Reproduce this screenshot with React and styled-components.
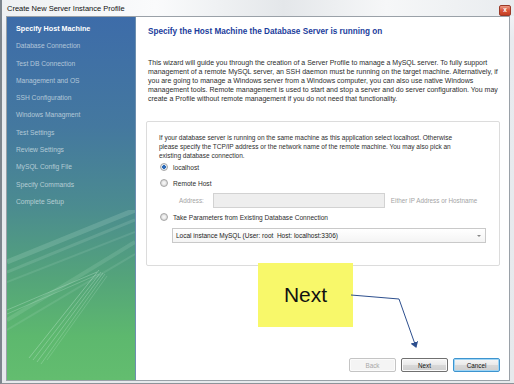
import React from 'react';
import styled, { createGlobalStyle } from 'styled-components';

const GlobalStyle = createGlobalStyle`
    html, body { margin: 0; padding: 0; }
    body {
        width: 514px;
        height: 384px;
        overflow: hidden;
        font-family: "Liberation Sans", Arial, sans-serif;
        background: #d9dde2;
    }
`;

const Screen = styled.div`
    width: 514px;
    height: 384px;
    display: flex;
    flex-direction: column;
    position: relative;
    overflow: hidden;
`;

const BehindStrip = styled.div`
    height: 3px;
    background: linear-gradient(90deg, #56606a, #8a939c 40%, #b8bec4 70%, #6d7780);
`;

const Window = styled.div`
    flex: 1;
    display: flex;
    flex-direction: column;
    background: linear-gradient(180deg, #f7f8fa 0%, #e8ebef 10%, #e6e9ec 100%);
    border-left: 2px solid #7d858d;
    border-bottom: 1px solid #8c9399;
`;

const TitleBar = styled.div`
    height: 16px;
    display: flex;
    align-items: center;
    justify-content: space-between;
    padding: 0 3px 0 5px;
    background: linear-gradient(90deg, #eef0f2 0%, #fafbfc 30%, #e4e7ea 55%, #f6f7f8 75%, #e9ecef 100%);
`;

const Title = styled.span`
    font-size: 7.5px;
    color: #111;
`;

const CloseButton = styled.div`
    width: 10px;
    height: 9px;
    margin-top: 5px;
    border-radius: 2px;
    background: linear-gradient(180deg, #ec9a86 0%, #d8553a 50%, #c43e22 100%);
    border: 1px solid #9a3a28;
    display: flex;
    align-items: center;
    justify-content: center;
    color: #fff;
    font-size: 6.5px;
    font-weight: bold;
    line-height: 1;
`;

const Body = styled.div`
    flex: 1;
    display: flex;
    margin: 0 4px 2px 4px;
    border: 1px solid #9aa1a8;
    position: relative;
`;

const Sidebar = styled.div`
    width: 128px;
    display: flex;
    flex-direction: column;
    padding-top: 3px;
    background: linear-gradient(180deg, #3d6ca9 0%, #44789f 30%, #4b8b90 52%, #54a47a 72%, #5db86e 88%, #63bd6f 100%);
`;

const Step = styled.div`
    height: 17.3px;
    line-height: 17.3px;
    padding-left: 9px;
    font-size: ${p => (p.active ? '7.2px' : '6.7px')};
    font-weight: ${p => (p.active ? 'bold' : 'normal')};
    color: ${p => (p.active ? '#ffffff' : 'rgba(225, 236, 240, 0.7)')};
    white-space: nowrap;
`;

const Streaks = styled.svg`
    margin-top: auto;
    display: block;
`;

const Content = styled.div`
    flex: 1;
    display: flex;
    flex-direction: column;
    background: #fff;
    padding: 10px 9px 8px 10px;
    border-left: 1px solid #6c8fb0;
`;

const Heading = styled.h1`
    margin: 0 0 0 2px;
    font-size: 8.2px;
    line-height: 10px;
    font-weight: bold;
    color: #1c3d9c;
`;

const Intro = styled.p`
    margin: 21px 0 0 2px;
    font-size: 7px;
    line-height: 9px;
    color: #2d2d2d;
    white-space: nowrap;
`;

const Panel = styled.div`
    margin-top: 18px;
    height: 145px;
    box-sizing: border-box;
    border: 1px solid #dcdcdc;
    border-radius: 2px;
    padding: 11px 12px 0 12px;
    display: flex;
    flex-direction: column;
`;

const PanelText = styled.p`
    margin: 0 0 -1px;
    font-size: 6.5px;
    line-height: 9px;
    color: #2d2d2d;
    white-space: nowrap;
`;

const Option = styled.label`
    display: flex;
    align-items: center;
    gap: 5px;
    height: 16px;
    margin-left: 1px;
    font-size: 6.6px;
    color: #2d2d2d;
`;

const Radio = styled.span`
    width: 6px;
    height: 6px;
    border-radius: 50%;
    border: 1px solid #a7a7a7;
    background: ${p => (p.checked
        ? 'radial-gradient(circle, #2b6ab8 0 1.6px, #dfe6ee 2px)'
        : 'radial-gradient(circle, #f4f4f4 0 1px, #d7d7d7 3px)')};
`;

const AddressRow = styled.div`
    display: flex;
    align-items: center;
    height: 18px;
    padding-left: 20px;
    font-size: 6.3px;
    color: #a4a4a4;
`;

const AddressInput = styled.div`
    width: 170px;
    height: 13px;
    margin: 0 6px 0 9px;
    border: 1px solid #d2d2d2;
    background: #eeeeee;
`;

const Select = styled.div`
    margin: 3px 1px 0 13px;
    height: 13px;
    border: 1px solid #c9c9c9;
    background: linear-gradient(180deg, #ffffff, #f4f4f4);
    display: flex;
    align-items: center;
    justify-content: space-between;
    padding: 0 4px 0 3px;
    font-size: 6.5px;
    color: #222;
`;

const Caret = styled.span`
    width: 0;
    height: 0;
    border-left: 2px solid transparent;
    border-right: 2px solid transparent;
    border-top: 2px solid #888;
`;

const Footer = styled.div`
    margin-top: auto;
    display: flex;
    justify-content: flex-end;
    gap: 5px;
`;

const Button = styled.button`
    width: 47px;
    height: 14px;
    padding: 0;
    font-family: "Liberation Sans", Arial, sans-serif;
    font-size: 6.3px;
    border-radius: 2px;
    border: 1px solid ${p => (p.primary ? '#3d94cf' : p.disabled ? '#c4c4c4' : '#707070')};
    color: ${p => (p.disabled ? '#a8a8a8' : '#111')};
    background: ${p => (p.disabled
        ? '#f4f4f4'
        : 'linear-gradient(180deg, #f6f6f6 0%, #e9e9e9 50%, #d8d8d8 52%, #cfcfcf 100%)')};
    box-shadow: ${p => (p.primary ? 'inset 0 0 0 1px #9fd5f5' : 'inset 0 0 0 1px #fbfbfb')};
`;

const Callout = styled.div`
    position: absolute;
    left: 251px;
    top: 246px;
    width: 95px;
    height: 64px;
    background: #f8f86a;
    display: flex;
    align-items: center;
    justify-content: center;
    font-size: 21px;
    color: #111;
    font-family: "Liberation Sans", Arial, sans-serif;
`;

const Pointer = styled.svg`
    position: absolute;
    left: 0;
    top: 0;
    pointer-events: none;
`;

const steps = [
    'Specify Host Machine',
    'Database Connection',
    'Test DB Connection',
    'Management and OS',
    'SSH Configuration',
    'Windows Managment',
    'Test Settings',
    'Review Settings',
    'MySQL Config File',
    'Specify Commands',
    'Complete Setup',
];

function SidebarArt() {
    return (
        <Streaks width="128" height="170" viewBox="0 0 128 170">
            <g stroke="#cfeedd" fill="none">
                <path d="M0 52 L128 0" strokeWidth="5" opacity="0.18" />
                <path d="M0 62 L128 10" strokeWidth="3" opacity="0.15" />
                <path d="M0 72 L128 22" strokeWidth="2" opacity="0.12" />
                <path d="M0 110 L128 32" strokeWidth="4" opacity="0.14" />
                <path d="M0 120 L128 44" strokeWidth="2" opacity="0.12" />
                <path d="M22 148 L92 60" strokeWidth="1" opacity="0.35" />
                <path d="M26 150 L94 62" strokeWidth="1" opacity="0.3" />
                <path d="M30 152 L96 63" strokeWidth="1" opacity="0.3" />
                <path d="M34 154 L98 64" strokeWidth="1" opacity="0.25" />
                <path d="M40 150 L100 66" strokeWidth="1" opacity="0.2" />
                <path d="M0 100 L90 62" strokeWidth="1" opacity="0.3" />
                <path d="M0 104 L92 64" strokeWidth="1" opacity="0.25" />
            </g>
        </Streaks>
    );
}

export default function App() {
    return (
        <Screen>
            <GlobalStyle />
            <BehindStrip />
            <Window>
                <TitleBar>
                    <Title>Create New Server Instance Profile</Title>
                    <CloseButton>x</CloseButton>
                </TitleBar>
                <Body>
                    <Sidebar>
                        {steps.map((s, i) => (
                            <Step key={s} active={i === 0}>{s}</Step>
                        ))}
                        <SidebarArt />
                    </Sidebar>
                    <Content>
                        <Heading>Specify the Host Machine the Database Server is running on</Heading>
                        <Intro>
                            This wizard will guide you through the creation of a Server Profile to manage a MySQL server. To fully support<br />
                            management of a remote MySQL server, an SSH daemon must be running on the target machine. Alternatively, if<br />
                            you are going to manage a Windows server from a Windows computer, you can also use native Windows<br />
                            management tools. Remote management is used to start and stop a server and do server configuration. You may<br />
                            create a Profile without remote management if you do not need that functionality.
                        </Intro>
                        <Panel>
                            <PanelText>
                                If your database server is running on the same machine as this application select localhost. Otherwise<br />
                                please specify the TCP/IP address or the network name of the remote machine. You may also pick an<br />
                                existing database connection.
                            </PanelText>
                            <Option><Radio checked />localhost</Option>
                            <Option><Radio />Remote Host</Option>
                            <AddressRow>
                                Address:
                                <AddressInput />
                                Either IP Address or Hostname
                            </AddressRow>
                            <Option><Radio />Take Parameters from Existing Database Connection</Option>
                            <Select>
                                <span>Local instance MySQL (User: root&nbsp; Host: localhost:3306)</span>
                                <Caret />
                            </Select>
                        </Panel>
                        <Footer>
                            <Button disabled>Back</Button>
                            <Button>Next</Button>
                            <Button primary>Cancel</Button>
                        </Footer>
                    </Content>
                    <Callout>Next</Callout>
                    <Pointer width="508" height="362" viewBox="0 0 508 362">
                        <defs>
                            <marker id="head" markerWidth="6" markerHeight="8" refX="5" refY="4" orient="auto">
                                <path d="M0 0 L6 4 L0 8 Z" fill="#2d4f8e" />
                            </marker>
                        </defs>
                        <path d="M344 278 L392 282 L409 330" stroke="#2d4f8e" strokeWidth="1" fill="none" markerEnd="url(#head)" />
                    </Pointer>
                </Body>
            </Window>
        </Screen>
    );
}
